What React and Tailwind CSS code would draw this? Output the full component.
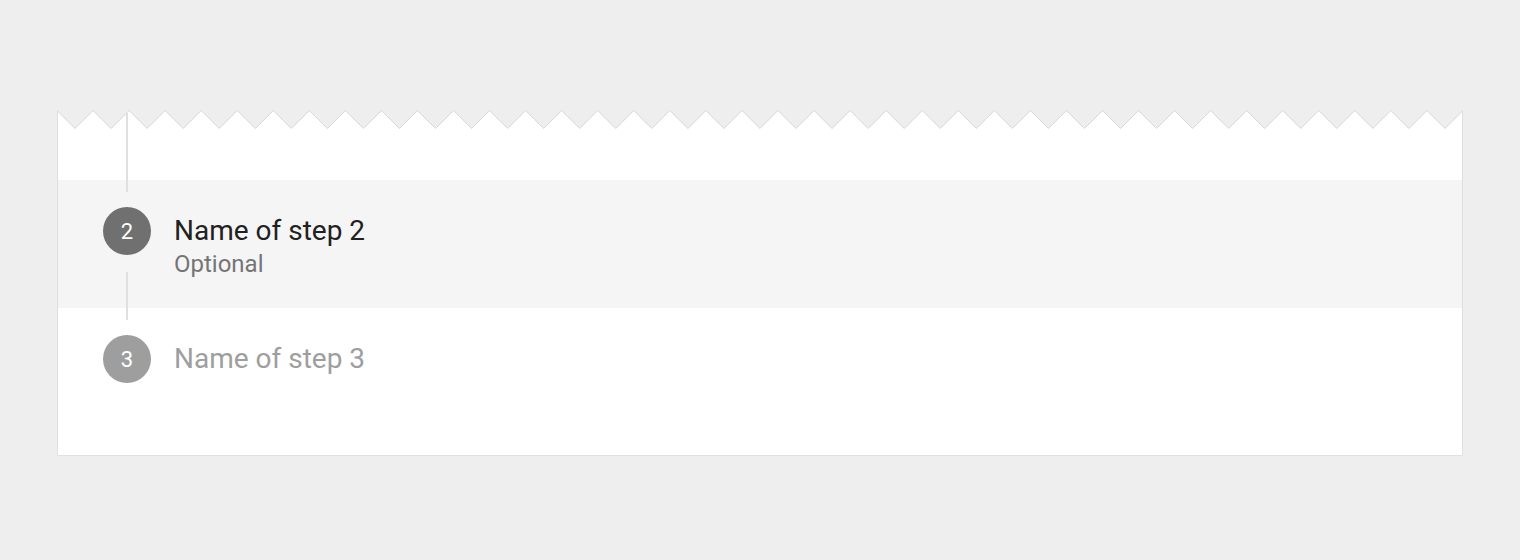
import React from "react";

// torn-paper edge along the top of the card
const EDGE_W = 1406;
const TEETH = 39;

const Zigzag = () => {
    const step = EDGE_W / TEETH;
    const pts = [];
    for (let i = 0; i <= TEETH; i++) {
        pts.push(`${(i * step).toFixed(2)},0.5`);
        if (i < TEETH) pts.push(`${((i + 0.5) * step).toFixed(2)},18.5`);
    }
    const line = pts.join(" ");
    return (
        <svg
            className="block w-full h-[19px]"
            viewBox={`0 0 ${EDGE_W} 19`}
            preserveAspectRatio="none"
        >
            <polygon points={`0,19 ${line} ${EDGE_W},19`} fill="#ffffff" />
            <polyline points={line} fill="none" stroke="#d6d6d6" strokeWidth="1" />
            <line x1="0.5" y1="0.5" x2="0.5" y2="19" stroke="#e0e0e0" strokeWidth="1" />
            <line x1={EDGE_W - 0.5} y1="0.5" x2={EDGE_W - 0.5} y2="19" stroke="#e0e0e0" strokeWidth="1" />
        </svg>
    );
};

const StepCircle = ({ num, color, connector }) => (
    <div className={`relative w-12 h-12 shrink-0 rounded-full flex items-center justify-center text-white text-[22px] ${color}`}>
        {num}
        {/* connector to the previous step */}
        <div className={`absolute left-[23px] bottom-full mb-[15px] w-[2px] bg-[#e0e0e0] ${connector}`} />
    </div>
);

const App = () => {
    return (
        <div className="w-full h-[560px] bg-[#eeeeee] pt-[110px] px-[57px]" style={{ fontFamily: "Roboto, 'Noto Sans', sans-serif" }}>
            <div className="flex flex-col">
                <Zigzag />
                <div className="bg-white border-x border-b border-[#e0e0e0] rounded-b-[2px]">
                    <div className="h-[51px]" />
                    <div className="h-[128px] bg-[#f5f5f5] pt-[27px] pl-[45px] flex gap-[23px]">
                        <StepCircle num="2" color="bg-[#707070]" connector="h-[79px]" />
                        <div className="pt-[8px]">
                            <div className="text-[28px] leading-8 text-[#212121]">Name of step 2</div>
                            <div className="text-[24px] leading-8 mt-[1px] text-[#757575]">Optional</div>
                        </div>
                    </div>
                    <div className="h-[147px] pt-[27px] pl-[45px] flex gap-[23px]">
                        <StepCircle num="3" color="bg-[#9e9e9e]" connector="h-[48px]" />
                        <div className="pt-[8px]">
                            <div className="text-[28px] leading-8 text-[#9e9e9e]">Name of step 3</div>
                        </div>
                    </div>
                </div>
            </div>
        </div>
    );
};

export default App;
